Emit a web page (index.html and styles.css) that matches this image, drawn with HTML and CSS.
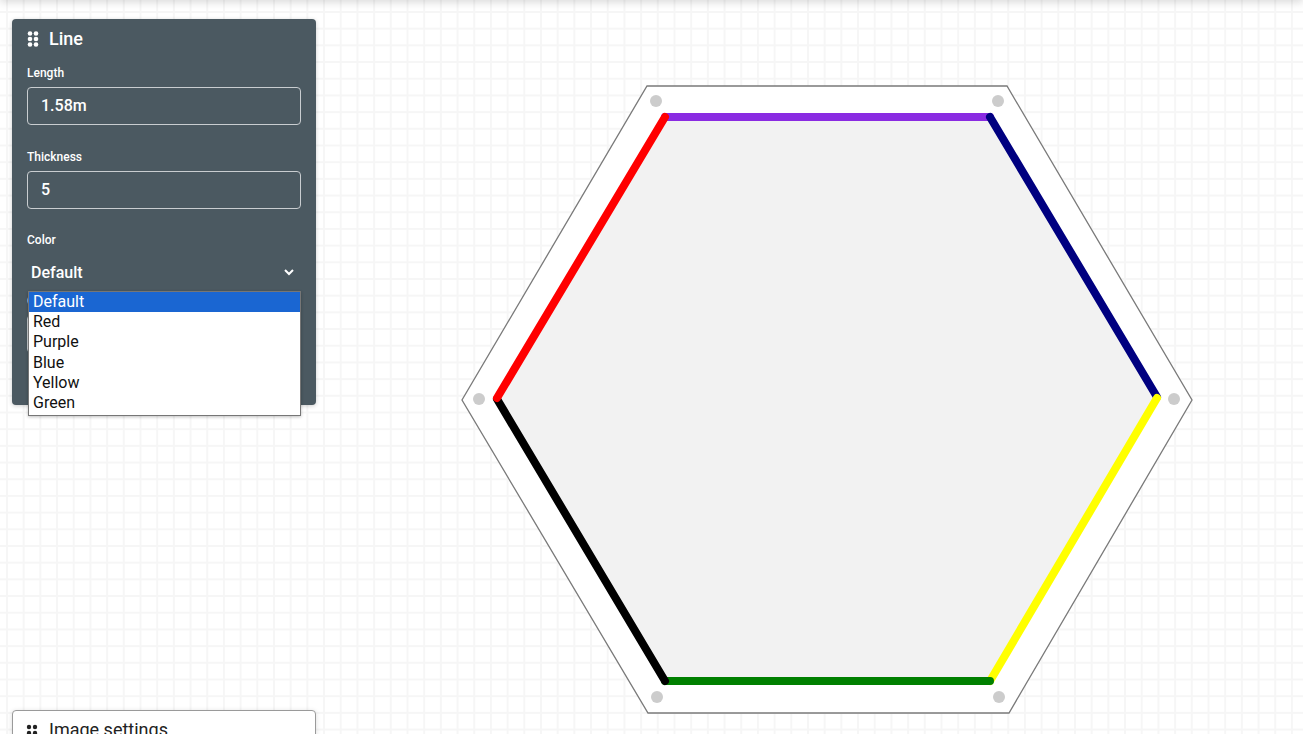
FILE: index.html
```html
<!DOCTYPE html>
<html>
<head>
<meta charset="utf-8">
<link rel="stylesheet" href="styles.css">
</head>
<body>
<div class="app">
  <div class="topshadow"></div>
  <svg class="canvas" width="1303" height="734" viewBox="0 0 1303 734">
    <polygon points="647,86 1007,86 1192,400 1009,713 648,713 462,400" fill="#fff" stroke="#7a7a7a" stroke-width="1.3"/>
    <polygon points="665,117 990,117 1157,398 990,681 665,681 497,399" fill="#f2f2f2"/>
    <g stroke-width="8" stroke-linecap="round">
      <line x1="665" y1="117" x2="990" y2="117" stroke="#8a2be2"/>
      <line x1="990" y1="117" x2="1157" y2="397" stroke="#000080"/>
      <line x1="1157" y1="398" x2="990" y2="681" stroke="#ffff00"/>
      <line x1="990" y1="681" x2="665" y2="681" stroke="#008000"/>
      <line x1="665" y1="681" x2="497" y2="399" stroke="#000"/>
      <line x1="497" y1="398" x2="665" y2="117" stroke="#ff0000"/>
    </g>
    <g fill="#cccccc">
      <circle cx="656" cy="101" r="6"/>
      <circle cx="998" cy="101" r="6"/>
      <circle cx="1174" cy="399" r="6"/>
      <circle cx="999" cy="697" r="6"/>
      <circle cx="657" cy="697" r="6"/>
      <circle cx="479" cy="399" r="6"/>
    </g>
  </svg>

  <div class="panel">
    <div class="panel-head">
      <svg class="grip" width="12" height="16" viewBox="0 0 12 16"><g fill="#fff"><circle cx="3" cy="2.5" r="2.3"/><circle cx="9" cy="2.5" r="2.3"/><circle cx="3" cy="8" r="2.3"/><circle cx="9" cy="8" r="2.3"/><circle cx="3" cy="13.5" r="2.3"/><circle cx="9" cy="13.5" r="2.3"/></g></svg>
      <span class="title">Line</span>
    </div>
    <div class="field">
      <div class="label">Length</div>
      <div class="input">1.58m</div>
    </div>
    <div class="field">
      <div class="label">Thickness</div>
      <div class="input">5</div>
    </div>
    <div class="field color-field">
      <div class="label">Color</div>
      <div class="select">
        <span>Default</span>
        <svg width="12" height="8" viewBox="0 0 12 8"><path d="M2 2 L6 6 L10 2" fill="none" stroke="#fff" stroke-width="2"/></svg>
      </div>
      <div class="dropdown">
        <div class="opt sel">Default</div>
        <div class="opt">Red</div>
        <div class="opt">Purple</div>
        <div class="opt">Blue</div>
        <div class="opt">Yellow</div>
        <div class="opt">Green</div>
      </div>
    </div>
    <div class="field hidden-field">
      <div class="label">Opacity</div>
      <div class="input">1</div>
    </div>
  </div>

  <div class="panel2">
    <svg class="grip" width="12" height="12" viewBox="0 0 12 12"><g fill="#222"><circle cx="3" cy="3" r="2.2"/><circle cx="9" cy="3" r="2.2"/><circle cx="3" cy="9" r="2.2"/><circle cx="9" cy="9" r="2.2"/></g></svg>
    <span class="title2">Image settings</span>
  </div>
</div>
</body>
</html>
```

FILE: styles.css
```css
* { box-sizing: border-box; }
html, body { margin: 0; padding: 0; }
body {
  font-family: Roboto, "Noto Sans", sans-serif;
  width: 1303px;
  height: 734px;
  overflow: hidden;
}
.app {
  position: relative;
  width: 1303px;
  height: 734px;
  background-color: #fff;
  background-image:
    linear-gradient(to right, #f6f6f6 0, #f6f6f6 1.6px, transparent 1.6px),
    linear-gradient(to bottom, #f6f6f6 0, #f6f6f6 1.6px, transparent 1.6px);
  background-size: 16.7px 16.7px;
  background-position: 6px 11px;
  overflow: hidden;
}
.topshadow {
  position: absolute;
  left: 0; right: 0; top: -10px;
  height: 10px;
  box-shadow: 0 2px 8px rgba(0,0,0,0.16);
  background: #fff;
}
.canvas {
  position: absolute;
  left: 0; top: 0;
}
.panel {
  position: absolute;
  left: 12px;
  top: 19px;
  width: 304px;
  height: 386px;
  background: #4b5961;
  border-radius: 4px;
  padding: 0 15px;
  color: #fff;
  box-shadow: 0 1px 4px rgba(0,0,0,0.2);
}
.panel-head {
  display: flex;
  align-items: center;
  gap: 10px;
  height: 39px;
  padding-left: 0;
}
.title {
  font-size: 18px;
  font-weight: 500;
}
.field {
  position: relative;
  padding-top: 8px;
}
.label {
  font-size: 12px;
  font-weight: 500;
  height: 14px;
  line-height: 14px;
  margin-bottom: 7px;
}
.input {
  height: 38px;
  border: 1px solid #c9cdd0;
  border-radius: 4px;
  padding-left: 13px;
  font-size: 16px;
  line-height: 36px;
  font-weight: 500;
  margin-bottom: 17px;
}
.color-field { padding-top: 7px; }
.select {
  display: flex;
  justify-content: space-between;
  align-items: center;
  height: 28px;
  margin-top: 11px;
  padding-left: 4px;
  padding-right: 6px;
  font-size: 16px;
  font-weight: 500;
}
.dropdown {
  position: absolute;
  left: 1px;
  top: 65px;
  width: 273px;
  background: #fff;
  border: 1px solid #767676;
  padding: 0 0 2px;
  z-index: 5;
  box-shadow: 0 1px 3px rgba(0,0,0,0.25);
}
.opt {
  height: 20.2px;
  line-height: 20px;
  font-size: 16px;
  color: #111;
  padding-left: 4px;
}
.opt.sel {
  background: #1a66d2;
  color: #fff;
}
.hidden-field { padding-top: 8px; }
.panel2 {
  position: absolute;
  left: 12px;
  top: 710px;
  width: 304px;
  height: 40px;
  background: #fff;
  border: 1px solid #9a9a9a;
  border-radius: 4px;
  display: flex;
  align-items: flex-start;
  gap: 11px;
  padding: 12px 0 0 13px;
  box-shadow: 0 1px 5px rgba(0,0,0,0.15);
}
.panel2 .grip { margin-top: 1px; }
.title2 {
  font-size: 18px;
  color: #222;
  line-height: 14px;
}
```
